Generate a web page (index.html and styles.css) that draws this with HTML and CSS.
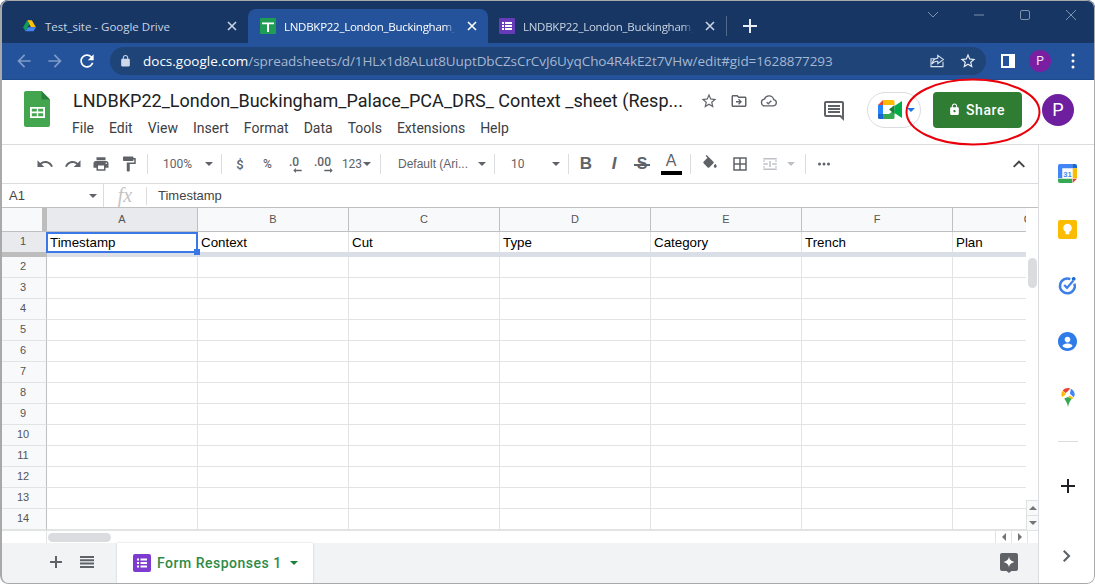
FILE: index.html
```html
<!DOCTYPE html>
<html lang="en">
<head>
<meta charset="utf-8">
<title>Google Sheets</title>
<link rel="stylesheet" href="styles.css">
</head>
<body>
<div class="app">
  <div class="tabstrip">
    <div class="tab tab-first">
      <svg class="fav" viewBox="0 0 24 24"><path fill="#ffc107" d="M8 2h8l7 12h-8.400z"/><path fill="#4285f4" d="M23 14l-4 7H5l4-7z"/><path fill="#0f9d58" d="M8 2l3.900 6.700L5 21l-4-7z"/></svg>
      <span class="tab-text">Test_site - Google Drive</span>
      <svg class="tab-x" viewBox="0 0 10 10"><path d="M1 1l8 8M9 1L1 9"/></svg>
    </div>
    <div class="tab tab-active">
      <svg class="fav" viewBox="0 0 16 16"><rect width="16" height="16" rx="1" fill="#1f9d55"/><path fill="#fff" d="M2 4.500h12v1.700H9V14H7V6.200H2z"/></svg>
      <span class="tab-text tab-fade">LNDBKP22_London_Buckingham_</span>
      <svg class="tab-x tab-x-on" viewBox="0 0 10 10"><path d="M1 1l8 8M9 1L1 9"/></svg>
    </div>
    <div class="tab tab-third">
      <svg class="fav" viewBox="0 0 16 16"><rect width="16" height="16" rx="1" fill="#673ab7"/><path fill="#fff" d="M3 4h2v2H3zm3 0h7v2H6zM3 7h2v2H3zm3 0h7v2H6zm-3 3h2v2H3zm3 0h7v2H6z"/></svg>
      <span class="tab-text tab-fade">LNDBKP22_London_Buckingham_</span>
      <svg class="tab-x" viewBox="0 0 10 10"><path d="M1 1l8 8M9 1L1 9"/></svg>
    </div>
    <div class="tab-sep"></div>
    <svg class="newtab" viewBox="0 0 14 14"><path fill="#e8eef7" d="M6 0h2v6h6v2H8v6H6V8H0V6h6z"/></svg>
    <div class="winctl">
      <svg class="wc" viewBox="0 0 14 14"><path fill="none" stroke="#7f92ad" d="M2 4l5 5 5-5"/></svg>
      <svg class="wc" viewBox="0 0 14 14"><path stroke="#7f92ad" d="M2 7h10"/></svg>
      <svg class="wc" viewBox="0 0 14 14"><rect x="2.500" y="2.500" width="9" height="9" rx="1.500" fill="none" stroke="#7f92ad"/></svg>
      <svg class="wc" viewBox="0 0 14 14"><path stroke="#7f92ad" d="M2 2l10 10M12 2L2 12"/></svg>
    </div>
  </div>

  <div class="navbar">
    <svg class="nav-ic nav-back" viewBox="0 0 24 24"><path fill="#7e9bc6" d="M20 11H7.830l5.590-5.590L12 4l-8 8 8 8 1.410-1.410L7.830 13H20v-2z"/></svg>
    <svg class="nav-ic nav-fwd" viewBox="0 0 24 24"><path fill="#7e9bc6" d="M4 11h12.170l-5.590-5.590L12 4l8 8-8 8-1.410-1.410L16.170 13H4v-2z"/></svg>
    <svg class="nav-ic nav-rel" viewBox="0 0 24 24"><path fill="#fff" d="M17.650 6.350C16.200 4.900 14.210 4 12 4c-4.420 0-7.990 3.580-7.990 8s3.570 8 7.990 8c3.730 0 6.840-2.550 7.730-6h-2.080c-.82 2.330-3.040 4-5.650 4-3.310 0-6-2.690-6-6s2.690-6 6-6c1.660 0 3.140.69 4.220 1.780L13 11h7V4l-2.350 2.350z"/></svg>
    <div class="omni">
      <svg class="omni-lock" viewBox="0 0 24 24"><path fill="#cfd9e8" d="M18 8h-1V6c0-2.760-2.240-5-5-5S7 3.240 7 6v2H6c-1.100 0-2 .9-2 2v10c0 1.100.9 2 2 2h12c1.100 0 2-.9 2-2V10c0-1.100-.9-2-2-2zm-2.900 0H8.900V6c0-1.710 1.390-3.100 3.100-3.100 1.710 0 3.100 1.390 3.100 3.100v2z"/></svg>
      <span class="url"><span class="url-host">docs.google.com</span>/spreadsheets/d/1HLx1d8ALut8UuptDbCZsCrCvJ6UyqCho4R4kE2t7VHw/edit#gid=1628877293</span>
      <svg class="omni-share" viewBox="0 0 24 24"><path fill="none" stroke="#d5deeb" stroke-width="1.500" d="M20 13v6.500H4V9h5M13 4.500L20.500 10 13 15.500V12.300c-3.500-.3-6 1-7.500 3.700.3-4.500 3-7.300 7.500-7.900z"/></svg>
      <svg class="omni-star" viewBox="0 0 24 24"><path fill="#e8eef7" d="M22 9.240l-7.190-.62L12 2 9.190 8.630 2 9.240l5.460 4.730L5.820 21 12 17.270 18.180 21l-1.630-7.030L22 9.240zM12 15.400l-3.760 2.270 1-4.280-3.320-2.880 4.380-.38L12 6.100l1.710 4.040 4.380.38-3.320 2.880 1 4.280L12 15.400z"/></svg>
    </div>
    <svg class="split" viewBox="0 0 14 14"><path fill="#fff" fill-rule="evenodd" d="M0 0h14v14H0zM2 2v10h6V2z"/></svg>
    <div class="chrome-avatar">P</div>
    <svg class="chrome-dots" viewBox="0 0 4 16"><circle cx="2" cy="2" r="1.500" fill="#fff"/><circle cx="2" cy="8" r="1.500" fill="#fff"/><circle cx="2" cy="14" r="1.500" fill="#fff"/></svg>
  </div>

  <header class="docbar">
    <svg class="sheets-logo" viewBox="0 0 26 36"><path fill="#43a64f" d="M2 0h15.500L26 8.500V34a2 2 0 0 1-2 2H2a2 2 0 0 1-2-2V2a2 2 0 0 1 2-2z"/><path fill="#2a7f3c" d="M17.500 0L26 8.500h-8.500z"/><path fill="#fff" fill-rule="evenodd" d="M6 16h15v11H6zm1.800 1.800v2.800h5v-2.800zm6.400 0v2.800h5v-2.800zM7.800 22.300v3h5v-3zm6.400 0v3h5v-3z"/></svg>
    <div class="doc-main">
      <div class="doc-title-row">
        <span class="doc-title">LNDBKP22_London_Buckingham_Palace_PCA_DRS_ Context _sheet (Resp...</span>
        <svg class="doc-ic doc-star" viewBox="0 0 24 24"><path fill="#5f6368" d="M22 9.240l-7.190-.62L12 2 9.190 8.630 2 9.240l5.460 4.730L5.820 21 12 17.270 18.180 21l-1.630-7.030L22 9.240zM12 15.400l-3.760 2.270 1-4.280-3.320-2.880 4.380-.38L12 6.100l1.710 4.040 4.380.38-3.320 2.880 1 4.280L12 15.400z"/></svg>
        <svg class="doc-ic doc-move" viewBox="0 0 24 24"><path fill="#5f6368" d="M20 6h-8l-2-2H4c-1.100 0-2 .9-2 2v12c0 1.100.9 2 2 2h16c1.100 0 2-.9 2-2V8c0-1.100-.9-2-2-2zm0 12H4V6h5.170l2 2H20v10zm-8-1l4-4-4-4-1.200 1.200 1.900 1.950H8v1.700h4.700l-1.900 1.950z"/></svg>
        <svg class="doc-ic doc-cloud" viewBox="0 0 24 24"><path fill="none" stroke="#5f6368" stroke-width="1.800" d="M6.500 18.500a4.500 4.500 0 0 1-.6-8.960A6.500 6.500 0 0 1 18.300 10.100a4.250 4.250 0 0 1-.3 8.400z"/><path fill="none" stroke="#5f6368" stroke-width="1.800" d="M8.800 13.500l2.200 2.200 4-4"/></svg>
      </div>
      <nav class="menu">
        <span>File</span><span>Edit</span><span>View</span><span>Insert</span><span>Format</span><span>Data</span><span>Tools</span><span>Extensions</span><span>Help</span>
      </nav>
    </div>
    <svg class="comment-ic" viewBox="2 2 20 20"><path fill="#5f6368" d="M21.990 4c0-1.100-.89-2-1.990-2H4c-1.100 0-2 .9-2 2v12c0 1.100.9 2 2 2h14l4 4-.01-18zM20 4v13.170L18.830 16H4V4h16zM6 12h12v2H6zm0-3h12v2H6zm0-3h12v2H6z"/></svg>
    <div class="meet">
      <svg class="meet-ic" viewBox="0 0 24 19"><path fill="#ea4335" d="M5 0v5H0z"/><path fill="#fbbc04" d="M5 0h10a1.500 1.500 0 0 1 1.500 1.500V5H5z"/><path fill="#2684fc" d="M0 5h5v9H0z"/><path fill="#1967d2" d="M0 14h5v5H1.500A1.500 1.500 0 0 1 0 17.500z"/><path fill="#34a853" d="M5 14h6l5.500-4v7.500A1.500 1.500 0 0 1 15 19H5z"/><path fill="#188038" d="M11 9.500l5.500-4.500v9z"/><path fill="#00ac47" d="M16.500 6L24 1v17l-7.500-5z"/></svg>
      <span class="meet-caret"></span>
    </div>
    <div class="share-btn">
      <svg class="share-lock" viewBox="0 0 24 24"><path fill="#fff" d="M18 8h-1V6c0-2.760-2.240-5-5-5S7 3.240 7 6v2H6c-1.100 0-2 .9-2 2v10c0 1.100.9 2 2 2h12c1.100 0 2-.9 2-2V10c0-1.100-.9-2-2-2zm-6 9c-1.100 0-2-.9-2-2s.9-2 2-2 2 .9 2 2-.9 2-2 2zm3.100-9H8.900V6c0-1.710 1.390-3.100 3.100-3.100 1.710 0 3.100 1.390 3.100 3.100v2z"/></svg>
      <span>Share</span>
    </div>
    <div class="doc-avatar">P</div>
  </header>

  <div class="body-row">
    <div class="sheet-area">
      <div class="toolbar">
        <div class="btn"><svg class="ti" viewBox="0 0 24 24"><path d="M12.500 8c-2.650 0-5.050.99-6.900 2.600L2 7v9h9l-3.620-3.620c1.390-1.160 3.160-1.880 5.120-1.880 3.540 0 6.550 2.310 7.600 5.500l2.370-.78C21.080 11.030 17.150 8 12.500 8z"/></svg></div>
        <div class="btn"><svg class="ti" viewBox="0 0 24 24"><path d="M18.400 10.600C16.550 8.990 14.150 8 11.500 8c-4.650 0-8.580 3.030-9.960 7.220L3.900 16c1.050-3.190 4.050-5.500 7.600-5.500 1.950 0 3.730.72 5.120 1.880L13 16h9V7l-3.600 3.600z"/></svg></div>
        <div class="btn"><svg class="ti" viewBox="0 0 24 24"><path d="M19 8H5c-1.660 0-3 1.340-3 3v6h4v4h12v-4h4v-6c0-1.660-1.340-3-3-3zm-3 11H8v-5h8v5zm3-7c-.55 0-1-.45-1-1s.45-1 1-1 1 .45 1 1-.45 1-1 1zm-1-9H6v4h12V3z"/></svg></div>
        <div class="btn"><svg class="ti" viewBox="0 0 24 24"><path d="M18 4V3c0-.55-.45-1-1-1H5c-.55 0-1 .45-1 1v4c0 .55.45 1 1 1h12c.55 0 1-.45 1-1V6h1v4H9v11c0 .55.45 1 1 1h2c.55 0 1-.45 1-1v-9h8V4h-3z"/></svg></div>
        <div class="sep sep-a"></div>
        <div class="drop drop-zoom"><span>100%</span><i class="caret"></i></div>
        <div class="sep"></div>
        <div class="btn btn-dollar"><span class="tb-b">$</span></div>
        <div class="btn btn-pct"><span class="tb-s">%</span></div>
        <div class="btn btn-dec"><span class="dec-t">.0<svg class="dec-ar" viewBox="0 0 10 6"><path d="M0 3l3-3v2h7v2H3v2z"/></svg></span></div>
        <div class="btn btn-inc"><span class="dec-t">.00<svg class="dec-ar dec-ar-r" viewBox="0 0 10 6"><path d="M10 3L7 0v2H0v2h7v2z"/></svg></span></div>
        <div class="btn btn-123"><span>123</span><i class="caret caret-tight"></i></div>
        <div class="sep sep-b"></div>
        <div class="drop drop-font"><span>Default (Ari...</span><i class="caret"></i></div>
        <div class="sep"></div>
        <div class="drop drop-size"><span>10</span><i class="caret"></i></div>
        <div class="sep"></div>
        <div class="btn btn-b"><span class="tb-bold">B</span></div>
        <div class="btn"><span class="tb-bold tb-ital">I</span></div>
        <div class="btn"><span class="tb-strike">S</span></div>
        <div class="btn btn-color"><span class="color-a">A</span><span class="color-bar"></span></div>
        <div class="sep sep-c"></div>
        <div class="btn btn-fill"><svg class="ti" viewBox="0 0 24 24"><path d="M16.560 8.940L7.620 0 6.210 1.410l2.380 2.380-5.150 5.150c-.59.59-.59 1.540 0 2.120l5.500 5.500c.29.290.68.44 1.060.44s.77-.15 1.060-.44l5.500-5.500c.59-.58.59-1.530 0-2.120zM19 11.500s-2 2.170-2 3.500c0 1.100.9 2 2 2s2-.9 2-2c0-1.330-2-3.500-2-3.500z"/></svg></div>
        <div class="btn btn-gap"><svg class="ti" viewBox="0 0 24 24"><path d="M3 3v18h18V3H3zm8 16H5v-6h6v6zm0-8H5V5h6v6zm8 8h-6v-6h6v6zm0-8h-6V5h6v6z"/></svg></div>
        <div class="btn btn-gap"><svg class="ti ti-off" viewBox="0 0 24 24"><path d="M3 4h18v2H3zM3 18h18v2H3zM3 7h2v2H3zM3 15h2v2H3zM19 7h2v2h-2zM19 15h2v2h-2zM3 11h6v2H3zM15 11h6v2h-6zM11 8h2v8h-2z"/></svg></div>
        <i class="caret caret-off"></i>
        <div class="sep sep-d"></div>
        <div class="btn btn-more"><svg class="ti" viewBox="0 0 24 24"><circle cx="6" cy="12" r="2"/><circle cx="12" cy="12" r="2"/><circle cx="18" cy="12" r="2"/></svg></div>
        <div class="btn btn-collapse"><svg class="ti ti-dark" viewBox="0 0 24 24"><path d="M12 7l-8 8 1.800 1.800L12 10.600l6.200 6.200L20 15z"/></svg></div>
      </div>

      <div class="formula">
        <div class="namebox"><span>A1</span><i class="caret"></i></div>
        <span class="fx">fx</span>
        <div class="fvalue">Timestamp</div>
      </div>

      <div class="grid-wrap">
        <div class="grid-main">
          <div class="grid-clip">
            <div class="row row-head">
              <div class="corner"></div>
              <div class="ch ch-on">A</div><div class="ch">B</div><div class="ch">C</div><div class="ch">D</div><div class="ch">E</div><div class="ch">F</div><div class="ch">G</div>
            </div>
            <div class="row row-one">
              <div class="rh rh-on">1</div>
              <div class="cell cell-a1">Timestamp<span class="sel"><i class="handle"></i></span></div><div class="cell">Context</div><div class="cell">Cut</div><div class="cell">Type</div><div class="cell">Category</div><div class="cell">Trench</div><div class="cell">Plan</div>
            </div>
            <div class="freeze"><div class="freeze-l"></div></div>
            <div class="row"><div class="rh">2</div><div class="cell"></div><div class="cell"></div><div class="cell"></div><div class="cell"></div><div class="cell"></div><div class="cell"></div><div class="cell"></div></div>
            <div class="row"><div class="rh">3</div><div class="cell"></div><div class="cell"></div><div class="cell"></div><div class="cell"></div><div class="cell"></div><div class="cell"></div><div class="cell"></div></div>
            <div class="row"><div class="rh">4</div><div class="cell"></div><div class="cell"></div><div class="cell"></div><div class="cell"></div><div class="cell"></div><div class="cell"></div><div class="cell"></div></div>
            <div class="row"><div class="rh">5</div><div class="cell"></div><div class="cell"></div><div class="cell"></div><div class="cell"></div><div class="cell"></div><div class="cell"></div><div class="cell"></div></div>
            <div class="row"><div class="rh">6</div><div class="cell"></div><div class="cell"></div><div class="cell"></div><div class="cell"></div><div class="cell"></div><div class="cell"></div><div class="cell"></div></div>
            <div class="row"><div class="rh">7</div><div class="cell"></div><div class="cell"></div><div class="cell"></div><div class="cell"></div><div class="cell"></div><div class="cell"></div><div class="cell"></div></div>
            <div class="row"><div class="rh">8</div><div class="cell"></div><div class="cell"></div><div class="cell"></div><div class="cell"></div><div class="cell"></div><div class="cell"></div><div class="cell"></div></div>
            <div class="row"><div class="rh">9</div><div class="cell"></div><div class="cell"></div><div class="cell"></div><div class="cell"></div><div class="cell"></div><div class="cell"></div><div class="cell"></div></div>
            <div class="row"><div class="rh">10</div><div class="cell"></div><div class="cell"></div><div class="cell"></div><div class="cell"></div><div class="cell"></div><div class="cell"></div><div class="cell"></div></div>
            <div class="row"><div class="rh">11</div><div class="cell"></div><div class="cell"></div><div class="cell"></div><div class="cell"></div><div class="cell"></div><div class="cell"></div><div class="cell"></div></div>
            <div class="row"><div class="rh">12</div><div class="cell"></div><div class="cell"></div><div class="cell"></div><div class="cell"></div><div class="cell"></div><div class="cell"></div><div class="cell"></div></div>
            <div class="row"><div class="rh">13</div><div class="cell"></div><div class="cell"></div><div class="cell"></div><div class="cell"></div><div class="cell"></div><div class="cell"></div><div class="cell"></div></div>
            <div class="row"><div class="rh">14</div><div class="cell"></div><div class="cell"></div><div class="cell"></div><div class="cell"></div><div class="cell"></div><div class="cell"></div><div class="cell"></div></div>
          </div>
          <div class="vbar">
            <div class="vbar-top"></div>
            <div class="vbar-track"><div class="vthumb"></div></div>
            <div class="vbtn"><i class="tri tri-up"></i></div>
            <div class="vbtn"><i class="tri tri-down"></i></div>
          </div>
        </div>
        <div class="hbar">
          <div class="hbar-l"></div>
          <div class="hbar-track"><div class="hthumb"></div></div>
          <div class="hbtn"><i class="tri tri-left"></i></div>
          <div class="hbtn"><i class="tri tri-right"></i></div>
          <div class="hbar-end"></div>
        </div>
      </div>

      <div class="sheetbar">
        <svg class="sb-plus" viewBox="0 0 14 14"><path fill="#5f6368" d="M6 1h2v5h5v2H8v5H6V8H1V6h5z"/></svg>
        <svg class="sb-list" viewBox="0 0 14 12"><path fill="#5f6368" d="M0 0h14v2H0zm0 3.300h14v2H0zm0 3.300h14v2H0zM0 10h14v2H0z"/></svg>
        <div class="sheet-tab">
          <svg class="form-ic" viewBox="0 0 18 18"><rect width="18" height="18" rx="2" fill="#7e3bd0"/><path fill="#fff" d="M4 4.500h2v2H4zm3.500 0H14v2H7.500zM4 8h2v2H4zm3.500 0H14v2H7.500zM4 11.500h2v2H4zm3.500 0H14v2H7.500z"/></svg>
          <span class="sheet-name">Form Responses 1</span>
          <i class="caret caret-green"></i>
        </div>
        <svg class="spark" viewBox="0 0 18 20"><path fill="#5f6368" d="M2 0h14a2 2 0 0 1 2 2v14a2 2 0 0 1-2 2h-4.500L9 20l-2.500-2H2a2 2 0 0 1-2-2V2a2 2 0 0 1 2-2z"/><path fill="#fff" d="M9 3.500c.5 3 1.500 4 5.500 5.500-4 1.500-5 2.500-5.500 5.500-.5-3-1.500-4-5.500-5.500 4-1.500 5-2.500 5.500-5.500z"/></svg>
      </div>
    </div>

    <aside class="side">
      <div class="side-slot">
        <svg class="side-ic" viewBox="0 0 20 20"><rect width="20" height="20" rx="2" fill="#fff"/><path fill="#4285f4" d="M2 0h13v4.500H4.500V15H0V2a2 2 0 0 1 2-2z"/><path fill="#1967d2" d="M15 0h3a2 2 0 0 1 2 2v2.500h-5z"/><path fill="#fbbc04" d="M15.500 4.500H20V15h-4.500z"/><path fill="#34a853" d="M4.500 15.500H15V20H2a2 2 0 0 1-2-2v-2.500z"/><path fill="#ea4335" d="M15.500 15.500H20L15.500 20z"/><text class="cal-num" x="10" y="13.500" text-anchor="middle">31</text></svg>
      </div>
      <div class="side-slot">
        <svg class="side-ic" viewBox="0 0 20 20"><rect width="20" height="20" rx="2" fill="#fbbc04"/><circle cx="10" cy="8.500" r="4.500" fill="#fff"/><rect x="8" y="12" width="4" height="3" fill="#fff"/></svg>
      </div>
      <div class="side-slot">
        <svg class="side-ic" viewBox="0 0 20 20"><path fill="none" stroke="#3f7fe8" stroke-width="2.600" d="M13 3.300A7.800 7.800 0 1 0 17.300 8"/><path fill="none" stroke="#3f7fe8" stroke-width="2.400" d="M6.500 9.500l3 3 6.500-7.500"/><circle cx="16.500" cy="3" r="2" fill="#1967d2"/></svg>
      </div>
      <div class="side-slot">
        <svg class="side-ic" viewBox="2 2 20 20"><path fill="#2f7be8" d="M12 2C6.480 2 2 6.480 2 12s4.480 10 10 10 10-4.480 10-10S17.520 2 12 2zm0 5c1.660 0 3 1.340 3 3s-1.340 3-3 3-3-1.340-3-3 1.340-3 3-3zm0 12c-2.200 0-4.400-.9-5.300-2.300.1-1.700 3.500-2.600 5.300-2.600 1.800 0 5.200.9 5.300 2.600-.9 1.400-3.100 2.300-5.300 2.300z"/></svg>
      </div>
      <div class="side-slot">
        <svg class="side-maps" viewBox="0 0 14 20"><path fill="#34a853" d="M3 11l4-1.500L11 11c-1.500 2.500-3.300 4.500-4 9-.7-4.500-2.500-6.500-4-9z"/><path fill="#fbbc04" d="M1 9.500C.3 8.500 0 7.500 0 6.500 0 5 .5 4 1.500 3L5 6.500z"/><path fill="#ea4335" d="M1.500 2.500C3 .8 5 0 7 0c1 0 1.800.2 2.500.5L4.800 5.500z"/><path fill="#4285f4" d="M10 .7c2.300 1 4 3.200 4 5.800 0 1.200-.4 2.300-1 3.200L9 6z"/><path fill="#fbbc04" d="M9 8.200l3.500 2L11 12 7 9z"/><circle cx="7" cy="6.500" r="2.300" fill="#fff"/></svg>
      </div>
      <div class="side-div"></div>
      <svg class="side-plus" viewBox="0 0 14 14"><path fill="#202124" d="M6 0h2v6h6v2H8v6H6V8H0V6h6z"/></svg>
      <svg class="side-chev" viewBox="0 0 8 12"><path fill="#5f6368" d="M1.500 0L0 1.500 4.500 6 0 10.500 1.500 12l6-6z"/></svg>
    </aside>
  </div>

  <svg class="annot" viewBox="0 0 138 70"><ellipse cx="69" cy="35" rx="66.500" ry="32.500" fill="none" stroke="#e8000b" stroke-width="2"/></svg>
</div>
</body>
</html>
```

FILE: styles.css
```css
* { box-sizing: border-box; }
html, body { margin: 0; padding: 0; background: #fff; }
body { width: 1095px; height: 584px; overflow: hidden; font-family: "Roboto", "Liberation Sans", sans-serif; }
.app { position: relative; width: 1095px; height: 584px; display: flex; flex-direction: column; overflow: hidden; border-radius: 8px; background: #fff; }
.app::after { content: ""; position: absolute; inset: 0; border: 1px solid #a9a9a9; border-left-width: 2px; border-radius: 8px; pointer-events: none; }
i { display: block; font-style: normal; }
svg { display: block; flex: none; }

/* Chrome tab strip */
.tabstrip { height: 43px; flex: none; display: flex; align-items: flex-end; background: #173663; font-family: "Open Sans", "Noto Sans", sans-serif; font-size: 11.500px; color: #c9d4e4; }
.tab { height: 34px; display: flex; align-items: center; flex: none; position: relative; }
.tab-first { width: 248px; padding-left: 22px; }
.tab-active { width: 240px; padding-left: 12px; background: #24539b; border-radius: 8px 8px 0 0; color: #fff; }
.tab-third { width: 238px; padding-left: 11px; }
.fav { width: 16px; height: 16px; margin-right: 8px; }
.tab-first .fav { width: 15px; height: 14px; }
.tab-text { flex: 1; min-width: 0; white-space: nowrap; }
.tab-fade { letter-spacing: -.27px; -webkit-mask-image: linear-gradient(90deg, #000 94%, transparent 100%); mask-image: linear-gradient(90deg, #000 94%, transparent 100%); }
.tab-x { width: 10px; height: 10px; margin: 0 11px 0 12px; fill: none; stroke: #c9d4e4; stroke-width: 1.600; }
.tab-x-on { stroke: #fff; }
.tab-sep { width: 1px; height: 20px; background: #54698a; margin-bottom: 7px; }
.newtab { width: 14px; height: 14px; margin: 0 0 10px 16px; }
.winctl { position: absolute; top: 8px; left: 926px; display: flex; gap: 32px; }
.wc { width: 14px; height: 14px; }

/* Chrome nav bar */
.navbar { height: 37px; flex: none; display: flex; align-items: center; background: #24539b; border-bottom: 1px solid #1f4a8d; padding: 0 0 1px 14px; }
.nav-ic { width: 20px; height: 20px; }
.nav-fwd { margin-left: 11px; }
.nav-rel { margin-left: 12px; }
.omni { width: 876px; height: 28px; margin-left: 13px; border-radius: 14px; background: #1f4478; display: flex; align-items: center; padding-left: 9px; }
.omni-lock { width: 13px; height: 14px; }
.url { margin-left: 11px; flex: 1; font-family: "Open Sans", "Noto Sans", sans-serif; font-size: 13.500px; letter-spacing: -.08px; color: #a6b8d2; white-space: nowrap; overflow: hidden; }
.url-host { color: #fff; letter-spacing: 0; }
.omni-share { width: 18px; height: 18px; margin-right: 13px; }
.omni-star { width: 18px; height: 18px; margin-right: 9px; }
.split { width: 14px; height: 14px; margin-left: 15px; }
.chrome-avatar { width: 22px; height: 22px; border-radius: 50%; background: #7b1fa2; color: #f3e5f5; font-size: 12px; line-height: 22px; text-align: center; margin-left: 14px; }
.chrome-dots { width: 4px; height: 16px; margin-left: 20px; }

/* Docs header */
.docbar { height: 65px; flex: none; display: flex; align-items: center; background: #fff; border-bottom: 1px solid #dadce0; padding-left: 24px; }
.sheets-logo { width: 26px; height: 36px; margin-top: -6px; }
.doc-main { width: 733px; margin-left: 23px; align-self: flex-start; padding-top: 9px; }
.doc-title-row { display: flex; align-items: center; height: 24px; }
.doc-title { width: 626px; flex: none; font-size: 18px; line-height: 24px; letter-spacing: .03px; color: #202124; white-space: nowrap; }
.doc-ic { width: 18px; height: 18px; }
.doc-star { margin-left: 1px; }
.doc-move { margin-left: 12px; }
.doc-cloud { margin-left: 12px; }
.menu { display: flex; gap: 15px; margin-top: 3px; margin-left: -1px; font-size: 14px; line-height: 24px; color: #3c4043; }
.comment-ic { width: 20px; height: 20px; margin: -2px 0 0 18px; }
.meet { width: 54px; height: 36px; margin: -5px 0 0 23px; border: 1px solid #dadce0; border-radius: 18px; display: flex; align-items: center; padding-left: 10px; }
.meet-ic { width: 24px; height: 19px; }
.meet-caret { width: 0; height: 0; margin-left: 5px; border: 4px solid transparent; border-top: 4px solid #1a73e8; border-bottom: 0; }
.share-btn { width: 89px; height: 36px; margin: -5px 0 0 12px; border-radius: 4px; background: #2e7d32; color: #fff; display: flex; align-items: center; padding-left: 15px; font-size: 14px; font-weight: 500; letter-spacing: .6px; }
.share-lock { width: 13px; height: 13px; margin-right: 5px; }
.doc-avatar { width: 32px; height: 32px; margin: -5px 0 0 20px; border-radius: 50%; background: #6e1f9f; color: #fff; text-align: center; font-size: 18px; line-height: 32px; }

/* Body */
.body-row { flex: 1; min-height: 0; display: flex; }
.sheet-area { width: 1039px; flex: none; display: flex; flex-direction: column; border-right: 1px solid #dadce0; }

/* Toolbar */
.toolbar { height: 39px; flex: none; display: flex; align-items: center; padding-left: 31px; border-bottom: 1px solid #dadce0; color: #5f6368; font-size: 12px; }
.btn { width: 28px; height: 28px; flex: none; display: flex; align-items: center; justify-content: center; position: relative; }
.ti { width: 18px; height: 18px; fill: #5f6368; }
.ti-off { fill: #bdc1c6; }
.ti-dark { fill: #444; }
.sep { width: 1px; height: 20px; background: #dadce0; flex: none; }
.sep-a { margin-left: 4px; }
.drop { display: flex; align-items: center; flex: none; position: relative; }
.drop-zoom { width: 73px; padding-left: 15px; }
.drop-font { width: 113px; padding-left: 17px; font-family: "Liberation Sans", sans-serif; }
.drop-size { width: 73px; padding-left: 16px; }
.caret { width: 0; height: 0; border: 4px solid transparent; border-top: 4px solid #5f6368; border-bottom: 0; }
.drop .caret { position: absolute; right: 8px; top: 50%; margin-top: -2px; }
.caret-tight { margin-left: 1px; }
.btn-dollar { margin-left: 4px; }
.tb-b { font-weight: 500; font-size: 13px; }
.tb-s { font-size: 12px; font-weight: 500; }
.btn-pct { width: 27px; }
.btn-dec { width: 26px; }
.btn-inc { width: 31px; }
.btn-123 { width: 37px; }
.sep-b { margin-left: 5px; }
.dec-t { position: relative; font-size: 12px; line-height: 14px; margin-top: -4px; font-weight: 500; }
.dec-ar { position: absolute; left: 4px; top: 13px; width: 9px; height: 5px; fill: #5f6368; }
.dec-ar-r { left: 10px; }
.btn-b { margin-left: 3px; }
.tb-bold { font-family: "Liberation Sans", sans-serif; font-weight: 700; font-size: 17px; line-height: 18px; }
.tb-ital { font-style: italic; }
.tb-strike { position: relative; font-family: "Liberation Sans", sans-serif; font-size: 16px; line-height: 18px; font-weight: 700; }
.tb-strike::after { content: ""; position: absolute; left: -3px; right: -3px; top: 9px; height: 2px; background: #5f6368; }
.btn-color { margin-left: 1px; flex-direction: column; }
.color-a { font-family: "Liberation Sans", sans-serif; font-size: 16px; line-height: 14px; margin-top: 0; }
.color-bar { width: 21px; height: 4px; background: #000; margin-top: 3px; }
.sep-c { margin-left: 5px; }
.btn-fill { margin-left: 5px; }
.btn-gap { margin-left: 2px; }
.caret-off { margin-left: 3px; border-top-color: #bdc1c6; }
.sep-d { margin-left: 10px; }
.btn-more { margin-left: 4px; }
.btn-collapse { margin-left: 167px; }

/* Formula bar */
.formula { height: 23px; flex: none; display: flex; align-items: center; font-family: "Liberation Sans", sans-serif; font-size: 13px; color: #444; }
.namebox { width: 104px; height: 23px; display: flex; align-items: center; justify-content: space-between; padding: 0 6px 0 9px; border-right: 1px solid #dadce0; }
.fx { width: 43px; height: 18px; font-family: "Liberation Serif", serif; font-style: italic; font-size: 20px; line-height: 16px; color: #c4c4c4; text-align: center; border-right: 1px solid #dadce0; flex: none; }
.fvalue { padding-left: 11px; color: #444; }

/* Grid */
.grid-wrap { flex: 1; min-height: 0; display: flex; flex-direction: column; border-top: 1px solid #c0c0c0; }
.grid-main { height: 322px; flex: none; display: flex; }
.grid-clip { width: 1026px; overflow: hidden; flex: none; }
.row { display: flex; height: 21px; width: 1100px; }
.row-head { height: 24px; }
.corner { width: 47px; flex: none; background: #f8f9fa; border-right: 5px solid #bdbdbd; border-bottom: 1px solid #c0c0c0; }
.ch { width: 151px; flex: none; background: #f8f9fa; border-right: 1px solid #c0c0c0; border-bottom: 1px solid #c0c0c0; text-align: center; font-family: "Liberation Sans", sans-serif; font-size: 11px; line-height: 23px; color: #555; }
.ch-on { background: #e8eaed; }
.rh { width: 47px; flex: none; background: #f8f9fa; border-right: 1px solid #c0c0c0; border-bottom: 1px solid #e2e3e3; text-align: center; font-family: "Liberation Sans", sans-serif; font-size: 11px; line-height: 19px; color: #555; }
.rh-on { background: #e8eaed; border-bottom: 0; }
.row-one { height: 20px; }
.cell { width: 151px; flex: none; border-right: 1px solid #e2e3e3; border-bottom: 1px solid #e2e3e3; font-family: "Liberation Sans", sans-serif; font-size: 13.330px; line-height: 20px; padding-left: 3px; color: #000; position: relative; white-space: nowrap; }
.row-one .cell { border-bottom: 0; line-height: 21px; }
.row-one .rh { line-height: 19px; }
.sel { position: absolute; left: -1px; top: 0; width: 152px; height: 21px; border: 2px solid #3b78e7; }
.handle { position: absolute; right: -4px; bottom: -4px; width: 6px; height: 6px; background: #3b78e7; }
.freeze { height: 5px; background: #dadee6; }
.freeze-l { width: 47px; height: 5px; background: #bdbdbd; }

/* Scrollbars */
.vbar { width: 12px; flex: none; display: flex; flex-direction: column; background: #fff; }
.vbar-top { height: 50px; }
.vbar-track { height: 242px; }
.vthumb { width: 9px; height: 30px; margin-left: 2px; background: #dadce0; border-radius: 5px; }
.vbtn { height: 15px; border: 1px solid #e0e0e0; border-width: 1px 0 0 1px; display: flex; align-items: center; justify-content: center; background: #f8f9fa; }
.hbar { flex: none; height: 13px; display: flex; border-top: 1px solid #e2e3e3; }
.hbar-l { width: 47px; border-right: 1px solid #e2e3e3; }
.hbar-track { width: 948px; }
.hthumb { width: 63px; height: 9px; margin: 2px 0 0 1px; background: #dadce0; border-radius: 5px; }
.hbtn { width: 16px; border-left: 1px solid #e2e3e3; display: flex; align-items: center; justify-content: center; }
.hbar-end { flex: 1; border-left: 1px solid #e2e3e3; }
.tri { width: 0; height: 0; border: 4px solid transparent; }
.tri-up { border-top: 0; border-bottom-color: #757575; }
.tri-down { border-bottom: 0; border-top-color: #757575; }
.tri-left { border-left: 0; border-right-color: #757575; }
.tri-right { border-right: 0; border-left-color: #757575; }

/* Sheet tabs */
.sheetbar { height: 41px; flex: none; display: flex; align-items: center; background: #f1f3f4; padding-left: 49px; }
.sb-plus { width: 14px; height: 14px; margin-top: -4px; }
.sb-list { width: 14px; height: 12px; margin: -4px 0 0 17px; }
.sheet-tab { width: 196px; height: 100%; margin-left: 23px; background: #fff; display: flex; align-items: center; padding-left: 16px; box-shadow: 0 0 2px rgba(60,64,67,.25); color: #2e8b47; }
.form-ic { width: 18px; height: 18px; margin-top: -1px; }
.sheet-name { margin: -1px 0 0 6px; font-size: 14px; font-weight: 500; letter-spacing: .5px; white-space: nowrap; }
.caret-green { margin: -1px 0 0 8px; border-top-color: #188038; }
.spark { width: 18px; height: 20px; margin: -2px 0 0 687px; }

/* Side panel */
.side { flex: 1; display: flex; flex-direction: column; align-items: center; }
.side-slot { height: 56px; flex: none; display: flex; align-items: center; justify-content: center; margin-left: 1px; }
.side-ic { width: 19px; height: 19px; }
.side-maps { width: 14px; height: 19px; }
.cal-num { font-family: "Liberation Sans", sans-serif; font-size: 8px; font-weight: 700; fill: #4285f4; }
.side-div { width: 20px; height: 1px; background: #dadce0; margin: 16px 0 0 1px; }
.side-plus { width: 14px; height: 14px; margin: 37px 0 0 1px; }
.side-chev { width: 8px; height: 12px; margin: 57px 0 0 0; }

/* Red annotation */
.annot { position: absolute; left: 904px; top: 77px; width: 138px; height: 70px; pointer-events: none; }
```
